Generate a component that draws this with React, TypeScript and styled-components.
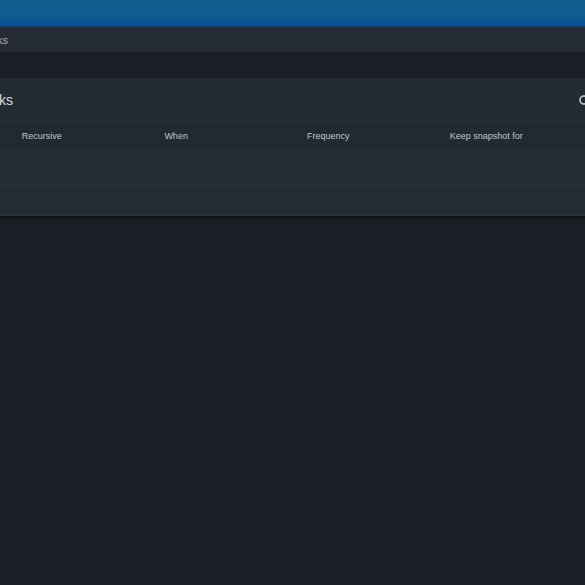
import React from "react";
import styled, { createGlobalStyle } from "styled-components";

const GlobalStyle = createGlobalStyle`
  html, body {
    margin: 0;
    padding: 0;
    background-color: #1a1f26;
    overflow: hidden;
  }
  body {
    font-family: "Liberation Sans", Arial, sans-serif;
  }
`;

const Page = styled.div`
  width: 585px;
  height: 585px;
  overflow: hidden;
  display: flex;
  flex-direction: column;
  background-color: #1a1f26;
`;

const TopBar = styled.div`
  height: 26px;
  background: linear-gradient(to bottom, #115e8d 0%, #0f5a90 70%, #0b4d98 100%);
  border-bottom: 2px solid #183a58;
  flex-shrink: 0;
`;

const Breadcrumbs = styled.div`
  height: 24px;
  background-color: #252b33;
  border-bottom: 1px solid #1f242a;
  display: flex;
  align-items: center;
  flex-shrink: 0;
`;

const ClippedStart = styled.div<{ $width: number }>`
  width: ${(p) => p.$width}px;
  display: flex;
  justify-content: flex-end;
  white-space: nowrap;
  flex-shrink: 0;
`;

const Crumb = styled.span`
  font-size: 11px;
  color: #a9b0b7;
`;

const Content = styled.div`
  padding-top: 25px;
  display: flex;
  flex-direction: column;
`;

const Card = styled.div`
  margin: 0 -30px 0 -30px;
  background-color: #222b32;
  box-shadow: 0 2px 3px rgba(0, 0, 0, 0.45);
  display: flex;
  flex-direction: column;
`;

const CardHeader = styled.div`
  height: 43px;
  padding-left: 30px;
  display: flex;
  align-items: center;
  border-bottom: 1px solid #283139;
`;

const Title = styled.span`
  font-size: 14px;
  color: #d6dade;
`;

const Spacer = styled.div`
  flex: 1;
`;

const IconButton = styled.div`
  width: 37px;
  display: flex;
  align-items: center;
  flex-shrink: 0;
  color: #c8cdd2;
`;

const Grid = styled.div`
  display: grid;
  grid-template-columns: repeat(6, 142.7px);
  margin-left: -91px;
`;

const Row = styled.div<{ $height: number }>`
  display: contents;
  & > div {
    height: ${(p) => p.$height}px;
    border-bottom: 1px solid #29333b;
  }
`;

const HeadCell = styled.div`
  display: flex;
  align-items: center;
  font-size: 9px;
  color: #bfc5cb;
  white-space: nowrap;
  background-color: #212a31;
`;

const Cell = styled.div`
  background-color: #222c33;
`;

const columns = ["Pool/Dataset", "Recursive", "When", "Frequency", "Keep snapshot for", "Enabled"];

export default function App() {
  return (
    <>
      <GlobalStyle />
      <Page>
        <TopBar />
        <Breadcrumbs>
          <ClippedStart $width={8}>
            <Crumb>Periodic Snapshot Tasks</Crumb>
          </ClippedStart>
        </Breadcrumbs>
        <Content>
          <Card>
            <CardHeader>
              <ClippedStart $width={13}>
                <Title>Periodic Snapshot Tasks</Title>
              </ClippedStart>
              <Spacer />
              <IconButton>
                <svg width="12" height="12" viewBox="0 0 12 12">
                  <circle cx="6" cy="6" r="4" fill="none" stroke="currentColor" strokeWidth="1.6" />
                </svg>
              </IconButton>
            </CardHeader>
            <Grid>
              <Row $height={28}>
                {columns.map((c) => (
                  <HeadCell key={c}>{c}</HeadCell>
                ))}
              </Row>
              <Row $height={34}>
                {columns.map((c) => (
                  <Cell key={c} />
                ))}
              </Row>
              <Row $height={29}>
                {columns.map((c) => (
                  <Cell key={c} />
                ))}
              </Row>
            </Grid>
          </Card>
        </Content>
      </Page>
    </>
  );
}
